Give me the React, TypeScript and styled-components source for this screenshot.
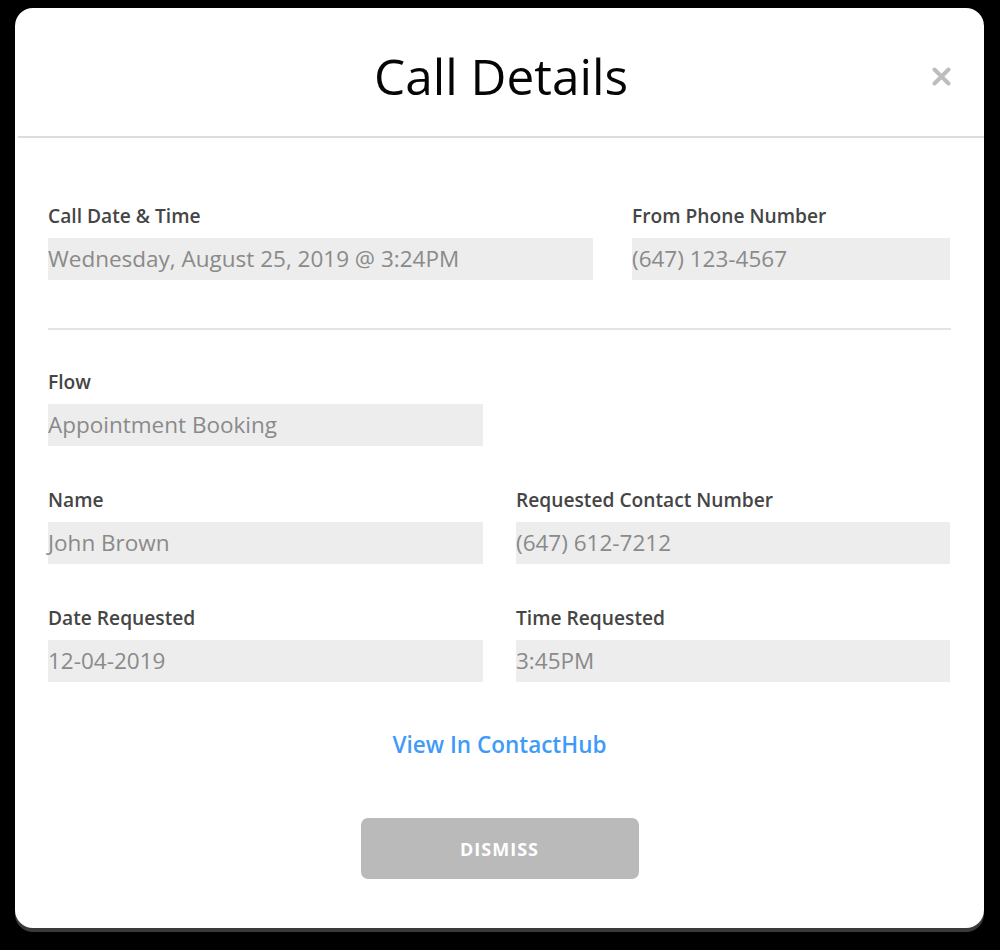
import React, { FC } from "react";
import styled, { createGlobalStyle } from "styled-components";

const GlobalStyle = createGlobalStyle`
  html, body {
    margin: 0;
    padding: 0;
    background: #000000;
  }
  body {
    font-family: "Open Sans", "Liberation Sans", sans-serif;
  }
`;

const Page = styled.div`
  width: 1000px;
  height: 950px;
  padding: 8px 16px 0 15px;
  box-sizing: border-box;
  background: #000000;
`;

const ModalWrapper = styled.div`
  background: #ffffff;
  border-radius: 18px;
  height: 920px;
  box-shadow: 0 4px 0 #3a3a3a;
  display: flex;
  flex-direction: column;
  overflow: hidden;
`;

const Header = styled.div`
  position: relative;
  height: 130px;
  padding-top: 8px;
  display: flex;
  align-items: center;
  justify-content: center;
  border-bottom: 2px solid #dddddd;
  box-sizing: border-box;
  margin-left: 3px;
`;

const Title = styled.h2`
  margin: 0;
  font-size: 49.5px;
  line-height: 66px;
  font-weight: 400;
  color: #050505;
`;

const CloseIcon = styled.div`
  position: absolute;
  right: 33px;
  top: 59px;
  width: 19px;
  height: 19px;
  cursor: pointer;
  display: flex;
`;

const Body = styled.div`
  padding: 65px 33px 48px 33px;
  display: flex;
  flex-direction: column;
`;

const Row = styled.div<{ $cols: string; $gap: number; $mb?: number }>`
  display: grid;
  grid-template-columns: ${(p) => p.$cols};
  column-gap: ${(p) => p.$gap}px;
  margin-bottom: ${(p) => p.$mb ?? 0}px;
`;

const Field = styled.div`
  display: flex;
  flex-direction: column;
`;

const Label = styled.div`
  font-size: 19.2px;
  line-height: 26px;
  font-weight: 600;
  color: #454545;
  margin-bottom: 9px;
  white-space: nowrap;
`;

const Value = styled.div`
  background: #ededed;
  height: 42px;
  line-height: 42px;
  font-size: 22.5px;
  color: #8a8a8a;
  white-space: nowrap;
`;

const Divider = styled.hr`
  border: none;
  border-top: 2px solid #e4e4e4;
  margin: 48px 0 39px 0;
`;

const LinkText = styled.a`
  align-self: center;
  margin-top: 48px;
  font-size: 22.5px;
  line-height: 30px;
  font-weight: 600;
  color: #3f9bf7;
  text-decoration: none;
  cursor: pointer;
`;

const DismissButton = styled.button`
  align-self: center;
  margin-top: 58px;
  width: 278px;
  height: 61px;
  border: none;
  border-radius: 7px;
  background: #bababa;
  color: #ffffff;
  font-family: "Open Sans", "Liberation Sans", sans-serif;
  font-size: 18px;
  font-weight: 700;
  letter-spacing: 1px;
  cursor: pointer;
`;

type Item = { label: string; value: string };

const FieldBox: FC<Item> = ({ label, value }) => (
  <Field>
    <Label>{label}</Label>
    <Value>{value}</Value>
  </Field>
);

const App: FC = () => {
  return (
    <>
      <GlobalStyle />
      <Page>
        <ModalWrapper>
          <Header>
            <Title>Call Details</Title>
            <CloseIcon>
              <svg width="19" height="19" viewBox="0 0 19 19">
                <path
                  d="M2.5 2.5 L16.5 16.5 M16.5 2.5 L2.5 16.5"
                  stroke="#bdbdbd"
                  strokeWidth="4"
                  strokeLinecap="round"
                />
              </svg>
            </CloseIcon>
          </Header>
          <Body>
            <Row $cols="545px 318px" $gap={39}>
              <FieldBox
                label="Call Date & Time"
                value="Wednesday, August 25, 2019 @ 3:24PM"
              />
              <FieldBox label="From Phone Number" value="(647) 123-4567" />
            </Row>
            <Divider />
            <Row $cols="435px 434px" $gap={33} $mb={41}>
              <FieldBox label="Flow" value="Appointment Booking" />
            </Row>
            <Row $cols="435px 434px" $gap={33} $mb={41}>
              <FieldBox label="Name" value="John Brown" />
              <FieldBox
                label="Requested Contact Number"
                value="(647) 612-7212"
              />
            </Row>
            <Row $cols="435px 434px" $gap={33}>
              <FieldBox label="Date Requested" value="12-04-2019" />
              <FieldBox label="Time Requested" value="3:45PM" />
            </Row>
            <LinkText>View In ContactHub</LinkText>
            <DismissButton>DISMISS</DismissButton>
          </Body>
        </ModalWrapper>
      </Page>
    </>
  );
};

export default App;
